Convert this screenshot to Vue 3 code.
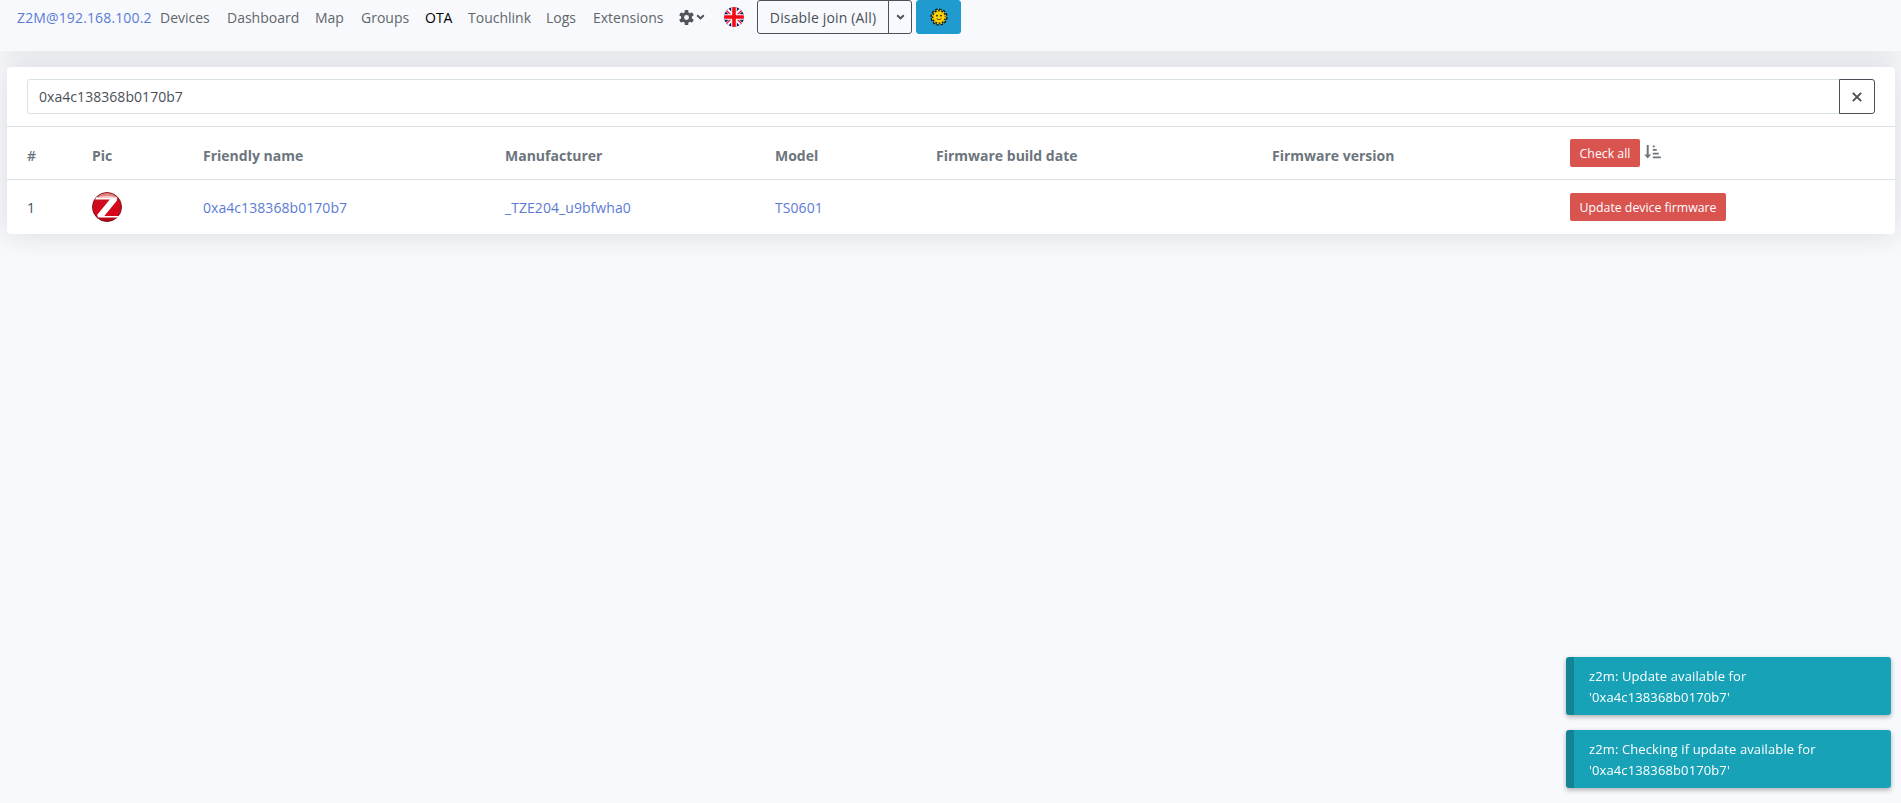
<script setup>
import { ref } from 'vue'

const search = ref('0xa4c138368b0170b7')
const links = [
  { id: 'devices', label: 'Devices' },
  { id: 'dashboard', label: 'Dashboard' },
  { id: 'map', label: 'Map' },
  { id: 'groups', label: 'Groups' },
  { id: 'ota', label: 'OTA' },
  { id: 'touchlink', label: 'Touchlink' },
  { id: 'logs', label: 'Logs' },
  { id: 'extensions', label: 'Extensions' }
]
const devices = [
  { ieee: '0xa4c138368b0170b7', manufacturer: '_TZE204_u9bfwha0', model: 'TS0601' }
]
const toasts = [
  { id: 1, text: 'z2m: Update available for' },
  { id: 2, text: 'z2m: Checking if update available for' }
]
</script>

<template>
  <div class="app">
    <nav class="navbar">
      <a class="brand" href="#">Z2M@192.168.100.2</a>
      <a
        v-for="l in links"
        :key="l.id"
        href="#"
        class="nav-link"
        :class="[l.id, { active: l.id === 'ota' }]"
      >{{ l.label }}</a>
      <a class="settings" href="#">
        <svg width="15" height="15" viewBox="0 0 14 14">
          <g fill="#50555a">
            <rect x="5.3" y="0" width="3.4" height="14" rx=".8" />
            <rect x="5.3" y="0" width="3.4" height="14" rx=".8" transform="rotate(60 7 7)" />
            <rect x="5.3" y="0" width="3.4" height="14" rx=".8" transform="rotate(120 7 7)" />
            <circle cx="7" cy="7" r="5.1" />
          </g>
          <circle cx="7" cy="7" r="2.3" fill="#f7f9fc" />
        </svg>
        <svg class="chev" width="9" height="6" viewBox="0 0 9 6">
          <path d="M1.2 1.2 4.5 4.4 7.8 1.2" />
        </svg>
      </a>
      <a class="flag" href="#">
        <svg width="20" height="20" viewBox="0 0 20 20">
          <clipPath id="round"><circle cx="10" cy="10" r="10" /></clipPath>
          <g clip-path="url(#round)">
            <path fill="#14145f" d="M0 0h20v20H0z" />
            <path stroke="#fff" stroke-width="4" d="M0 0l20 20M20 0 0 20" />
            <path stroke="#e8112d" stroke-width="1.3" d="M0 1l8 8M20 1l-8 8M0 19l8-8M20 19l-8-8" />
            <path stroke="#fff" stroke-width="5.6" d="M10 0v20M0 10h20" />
            <path stroke="#f00a14" stroke-width="3.6" d="M10 0v20M0 10h20" />
          </g>
        </svg>
      </a>
      <div class="btn-group">
        <button class="btn join"><span>Disable join (All)</span></button>
        <button class="btn toggle">
          <svg class="chev" width="9" height="6" viewBox="0 0 9 6">
            <path d="M1.2 1.2 4.5 4.4 7.8 1.2" />
          </svg>
        </button>
      </div>
      <button class="btn theme">
        <svg width="18" height="18" viewBox="0 0 18 18">
          <circle cx="9" cy="9" r="7.3" fill="none" stroke="#17130a" stroke-width="2.6" stroke-dasharray="2.3 1.52" />
          <circle cx="9" cy="9" r="7" fill="#17130a" />
          <circle cx="9" cy="9" r="6.4" fill="none" stroke="#ffd20a" stroke-width="1.6" stroke-dasharray="1.7 1.65" />
          <circle cx="9" cy="9" r="5.8" fill="#ffd20a" />
          <circle cx="7" cy="7.7" r=".9" fill="#30240a" />
          <circle cx="11" cy="7.7" r=".9" fill="#30240a" />
          <path d="M6.5 10.7q2.5 2.2 5 0" fill="none" stroke="#5b3d05" stroke-width=".9" />
        </svg>
      </button>
    </nav>

    <main class="content">
      <div class="card">
        <div class="search-row">
          <input v-model="search" type="text" />
          <button class="btn clear">
            <svg width="10" height="10" viewBox="0 0 10 10">
              <path d="M.8.8l8.4 8.4M9.2.8.8 9.2" />
            </svg>
          </button>
        </div>
        <table>
          <colgroup>
            <col class="c-num" />
            <col class="c-pic" />
            <col class="c-name" />
            <col class="c-manuf" />
            <col class="c-model" />
            <col class="c-date" />
            <col class="c-version" />
            <col />
          </colgroup>
          <thead>
            <tr>
              <th>#</th>
              <th>Pic</th>
              <th>Friendly name</th>
              <th>Manufacturer</th>
              <th>Model</th>
              <th>Firmware build date</th>
              <th>Firmware version</th>
              <th>
                <div class="actions">
                  <button class="btn-danger check">Check all</button>
                  <svg width="17" height="14" viewBox="0 0 17 14">
                    <path fill="#6c757d" d="M2.7 0h2v9.6h2.4L3.7 13.6.3 9.6h2.4z" />
                    <path fill="#6c757d" d="M8.8.5h2v1.8h-2zM8.8 4h4v1.8h-4zM8.8 7.8h6v1.8h-6zM8.8 11.5h8v1.8h-8z" />
                  </svg>
                </div>
              </th>
            </tr>
          </thead>
          <tbody>
            <tr v-for="(d, i) in devices" :key="d.ieee">
              <td class="num">{{ i + 1 }}</td>
              <td class="pic-cell">
                <svg class="pic" width="30" height="30" viewBox="0 0 30 30">
                  <defs>
                    <linearGradient id="ball" x1="0" y1="0" x2="0" y2="1">
                      <stop offset="0" stop-color="#e9a09a" />
                      <stop offset=".2" stop-color="#d8544e" />
                      <stop offset=".24" stop-color="#c90f1c" />
                      <stop offset=".8" stop-color="#d9041c" />
                      <stop offset="1" stop-color="#a00a14" />
                    </linearGradient>
                  </defs>
                  <circle cx="15" cy="15" r="14.5" fill="url(#ball)" stroke="#84131a" />
                  <path fill="#fff" d="M4.5 5.3Q14 3.8 24.6 5L25 8.4 12.3 24H27l-1.2 1.5H6l-.8-2.7L17.8 7.4H3z" />
                  <path fill="#f3c9c6" d="M5 5.3Q14 2.4 24 5L23 6H4.5z" />
                </svg>
              </td>
              <td><a href="#">{{ d.ieee }}</a></td>
              <td><a href="#">{{ d.manufacturer }}</a></td>
              <td><a href="#">{{ d.model }}</a></td>
              <td></td>
              <td></td>
              <td class="update-cell"><button class="btn-danger update">Update device firmware</button></td>
            </tr>
          </tbody>
        </table>
      </div>
    </main>

    <div class="toasts">
      <div v-for="t in toasts" :key="t.id" class="toast">
        {{ t.text }}<br />'0xa4c138368b0170b7'
      </div>
    </div>
  </div>
</template>

<style>
body {
  background: #f7f9fc;
  overflow: hidden;
}
</style>

<style scoped>
* { box-sizing: border-box; }
.app {
  height: 803px;
  font-family: "Open Sans", "Noto Sans", sans-serif;
  font-size: 14px;
  line-height: 22px;
  color: #495057;
}
a {
  color: #5b7bd5;
  text-decoration: none;
}
button {
  font: inherit;
  cursor: pointer;
  padding: 0;
  white-space: nowrap;
}

.navbar {
  display: flex;
  align-items: center;
  height: 51px;
  padding: 0 17px 17px;
  background: #f7f9fc;
  box-shadow: 0 0 32px rgba(33, 37, 41, .1);
  white-space: nowrap;
}
.brand, .nav-link { padding-top: 2px; }
.brand {
  width: 143px;
  letter-spacing: .14px;
}
.nav-link { color: #62666a; }
.nav-link.active { color: #000; }
.devices { width: 67px; }
.dashboard { width: 88px; }
.map { width: 46px; }
.groups { width: 64px; }
.ota { width: 43px; }
.touchlink { width: 78px; }
.logs { width: 47px; }
.extensions { width: 86px; }
.settings {
  display: flex;
  align-items: center;
  gap: 2px;
  width: 45px;
}
.chev path, .clear path {
  fill: none;
  stroke: #495057;
  stroke-width: 1.9;
}
.flag {
  display: flex;
  width: 33px;
}
.btn-group {
  display: flex;
  margin-right: 4px;
}
.btn {
  display: flex;
  align-items: center;
  justify-content: center;
  height: 34px;
  border: 1px solid #495057;
  border-radius: 3px;
  background: transparent;
  color: #495057;
}
.join {
  width: 132px;
  border-radius: 3px 0 0 3px;
  letter-spacing: .15px;
}
.join span { padding-top: 2px; }
.toggle {
  width: 24px;
  margin-left: -1px;
  border-radius: 0 3px 3px 0;
}
.theme {
  width: 45px;
  border-color: #1f9bcf;
  background: #1f9bcf;
}

.content {
  height: 752px;
  padding: 16px 6px 0 7px;
  overflow: hidden;
}
.card {
  height: 167px;
  border-radius: 4px;
  background: #fff;
  box-shadow: 0 0 28px rgba(33, 37, 41, .14);
}
.search-row {
  display: flex;
  height: 59px;
  padding: 12px 20px;
}
input {
  flex: 1;
  height: 35px;
  padding: 0 11px;
  border: 1px solid #d9e2e6;
  border-radius: 3px 0 0 3px;
  outline: 0;
  font: inherit;
  letter-spacing: .05px;
  color: #495057;
}
.clear {
  width: 36px;
  height: 35px;
  margin-left: -1px;
  border-radius: 0 3px 3px 0;
}

table {
  width: 100%;
  border-collapse: separate;
  border-spacing: 0;
  table-layout: fixed;
}
.c-num { width: 73px; }
.c-pic { width: 111px; }
.c-name { width: 302px; }
.c-manuf { width: 270px; }
.c-model { width: 161px; }
.c-date { width: 336px; }
.c-version { width: 298px; }
th, td {
  padding: 0 12px;
  border-top: 1px solid #d9e2e6;
  text-align: left;
  vertical-align: middle;
}
th:first-child, td:first-child { padding-left: 20px; }
th {
  height: 53px;
  padding-top: 5px;
  font-weight: 700;
  color: #6c757d;
}
th:first-child { font-weight: 600; }
th:last-child { padding-top: 0; }
td {
  height: 55px;
  padding-top: 2px;
  letter-spacing: .06px;
}
td.pic-cell, td.update-cell { padding-top: 0; }
.num { font-weight: 500; }
.pic { display: block; }
.actions {
  display: flex;
  align-items: center;
  gap: 4px;
}
.actions svg { margin-top: -3px; }
.btn-danger {
  display: block;
  height: 28px;
  border: 0;
  border-radius: 2px;
  background: #d9534f;
  color: #fff;
  font-size: 12.3px;
  font-weight: 400;
  line-height: 29px;
}
.check { width: 70px; }
.update { width: 156px; }

.toasts {
  position: fixed;
  right: 10px;
  bottom: 15px;
  display: flex;
  flex-direction: column;
  gap: 15px;
}
.toast {
  width: 325px;
  height: 58px;
  padding: 9px 15px;
  border-left: 8px solid #138496;
  border-radius: 3px;
  background: #17a2b8;
  box-shadow: 0 2px 5px rgba(0, 0, 0, .3);
  color: #fff;
  font-size: 13px;
  letter-spacing: .12px;
  line-height: 21px;
}
</style>
